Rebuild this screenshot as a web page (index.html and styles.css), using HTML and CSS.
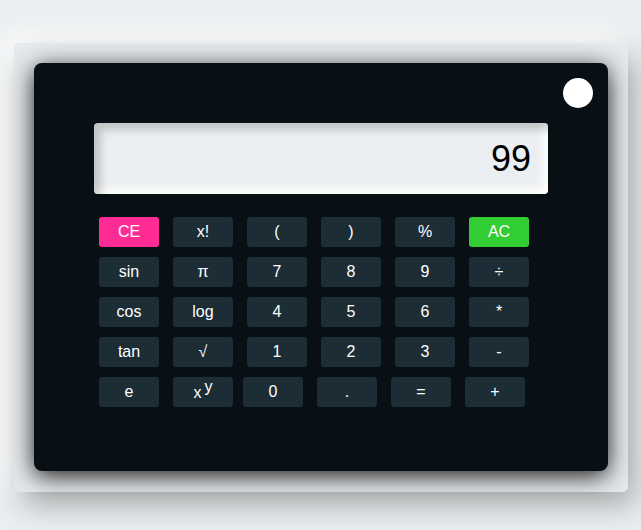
FILE: index.html
```html
<!DOCTYPE html>
<html>
<head>
<meta charset="utf-8">
<link rel="stylesheet" href="styles.css">
</head>
<body>
<div class="frame">
  <div class="calc">
    <div class="top">
      <div class="toggle"></div>
    </div>
    <div class="display">99</div>
    <div class="keys">
      <div class="row">
        <div class="key ce">CE</div>
        <div class="key">x!</div>
        <div class="key">(</div>
        <div class="key">)</div>
        <div class="key">%</div>
        <div class="key ac">AC</div>
      </div>
      <div class="row">
        <div class="key">sin</div>
        <div class="key">π</div>
        <div class="key">7</div>
        <div class="key">8</div>
        <div class="key">9</div>
        <div class="key">÷</div>
      </div>
      <div class="row">
        <div class="key">cos</div>
        <div class="key">log</div>
        <div class="key">4</div>
        <div class="key">5</div>
        <div class="key">6</div>
        <div class="key">*</div>
      </div>
      <div class="row">
        <div class="key">tan</div>
        <div class="key">√</div>
        <div class="key">1</div>
        <div class="key">2</div>
        <div class="key">3</div>
        <div class="key">-</div>
      </div>
      <div class="row">
        <div class="key">e</div>
        <div class="key pow">x<sup>y</sup></div>
        <div class="key">0</div>
        <div class="key">.</div>
        <div class="key">=</div>
        <div class="key">+</div>
      </div>
    </div>
  </div>
</div>
</body>
</html>
```
FILE: styles.css
```css
html, body {
  margin: 0;
  padding: 0;
}
body {
  background: #eceff1;
  font-family: "Liberation Sans", Arial, sans-serif;
  height: 530px;
  overflow: hidden;
}
.frame {
  margin: 43px 0 0 14px;
  width: 614px;
  height: 449px;
  box-sizing: border-box;
  padding: 20px;
  background: #e7eaed;
  border-radius: 5px;
  box-shadow: 8px 14px 30px rgba(0, 0, 0, 0.28), -10px -8px 24px rgba(255, 255, 255, 0.95);
}
.calc {
  width: 574px;
  height: 408px;
  box-sizing: border-box;
  background: #080f15;
  border-radius: 8px;
  padding: 15px;
  box-shadow: 0 5px 24px rgba(0, 0, 0, 0.9);
}
.top {
  display: flex;
  justify-content: flex-end;
}
.toggle {
  width: 30px;
  height: 30px;
  border-radius: 50%;
  background: #ffffff;
}
.display {
  margin: 15px 45px 0 45px;
  height: 71px;
  box-sizing: border-box;
  background: #eceff1;
  border-radius: 4px;
  box-shadow: inset 7px 7px 9px rgba(0, 0, 0, 0.18), inset -5px -5px 8px #ffffff;
  display: flex;
  align-items: center;
  justify-content: flex-end;
  padding-right: 17px;
  font-size: 36px;
  color: #000;
}
.keys {
  margin: 23px 0 0 50px;
  display: flex;
  flex-direction: column;
  gap: 10px;
}
.row {
  display: flex;
  gap: 14px;
}
.key {
  width: 60px;
  height: 30px;
  border-radius: 3px;
  background: #1c2d36;
  color: #ffffff;
  font-size: 16px;
  display: flex;
  align-items: center;
  justify-content: center;
  line-height: 1;
}
.key.ce {
  background: #ff2d93;
}
.key.ac {
  background: #32cd32;
}
.key.pow {
  margin-right: -4px;
  padding-top: 1px;
  box-sizing: border-box;
}
.key.pow sup {
  font-size: 16px;
  position: relative;
  top: -6px;
  vertical-align: top;
  margin-left: 3px;
}
```
